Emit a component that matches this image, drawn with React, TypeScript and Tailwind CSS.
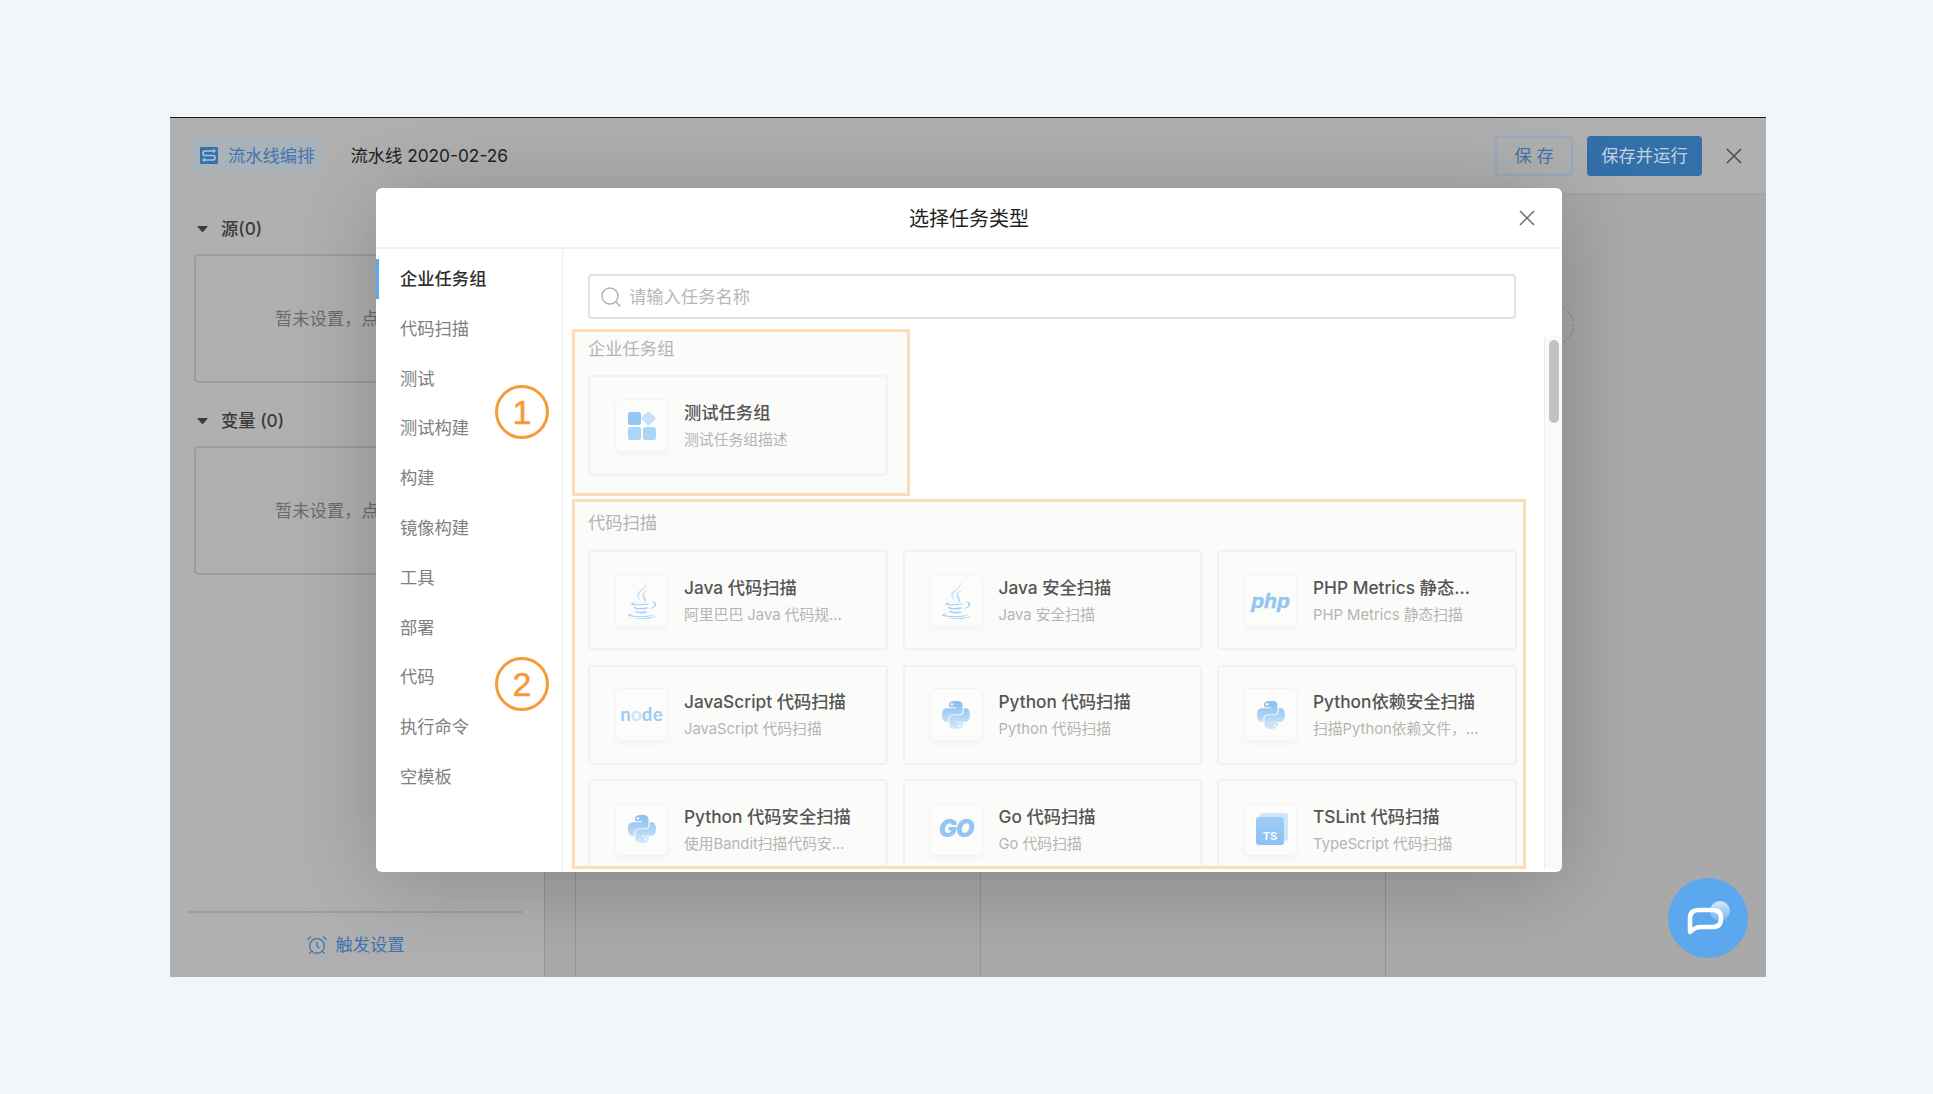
import { ReactNode } from "react";
import { AlarmClock, Search } from "lucide-react";
import { FaJava, FaPython } from "react-icons/fa";

const FONT = "font-['Inter','Noto_Sans_CJK_SC',sans-serif]";

const categorias = [
  "企业任务组",
  "代码扫描",
  "测试",
  "测试构建",
  "构建",
  "镜像构建",
  "工具",
  "部署",
  "代码",
  "执行命令",
  "空模板",
];

function IconeGrupo() {
  return (
    <svg width="28" height="28" viewBox="0 0 28 28">
      <rect x="0" y="0" width="13" height="13" rx="2.5" fill="#94c6f4" />
      <rect x="15" y="1" width="11" height="11" rx="2" transform="rotate(45 20.5 6.5)" fill="#c9e2f9" />
      <rect x="0" y="15" width="13" height="13" rx="2.5" fill="#abd4f7" />
      <rect x="15" y="15" width="13" height="13" rx="2.5" fill="#abd4f7" />
    </svg>
  );
}

function IconeJava() {
  return <FaJava className="h-[38px] w-[38px] fill-[url(#gradJava)]" />;
}

function IconePython() {
  return <FaPython className="h-[32px] w-[32px] fill-[url(#gradPython)]" />;
}

function IconeNode() {
  return (
    <span className="font-['Lato',sans-serif] text-[18.5px] leading-none font-bold tracking-[0.3px] text-[#9ccbf5]">
      n<span className="text-[#cfe5f9]">o</span>de
    </span>
  );
}

function IconePhp() {
  return (
    <span className="font-['Liberation_Sans',sans-serif] text-[21px] leading-none font-bold text-[#92c5f3] italic [-webkit-text-stroke:0.5px_#92c5f3]">
      php
    </span>
  );
}

function IconeGo() {
  return (
    <span className="font-['Inter',sans-serif] text-[24px] leading-none font-black tracking-[-1px] text-[#92c5f3] italic">
      GO
    </span>
  );
}

function IconeTs() {
  return (
    <div className="relative ml-[3px] h-[32px] w-[32px]">
      <div className="absolute top-0 right-0 h-[28px] w-[28px] rounded-[3px] bg-[#cfe5f9]" />
      <div className="absolute bottom-0 left-0 flex h-[28px] w-[28px] items-end justify-center rounded-[3px] bg-gradient-to-b from-[#9fcdf5] to-[#8cc1f2] pb-[2px] font-['Inter',sans-serif] text-[11px] leading-[14px] font-semibold text-white">
        TS
      </div>
    </div>
  );
}

const tarefas: { titulo: string; descricao: string; icone: ReactNode }[] = [
  { titulo: "Java 代码扫描", descricao: "阿里巴巴 Java 代码规...", icone: <IconeJava /> },
  { titulo: "Java 安全扫描", descricao: "Java 安全扫描", icone: <IconeJava /> },
  { titulo: "PHP Metrics 静态...", descricao: "PHP Metrics 静态扫描", icone: <IconePhp /> },
  { titulo: "JavaScript 代码扫描", descricao: "JavaScript 代码扫描", icone: <IconeNode /> },
  { titulo: "Python 代码扫描", descricao: "Python 代码扫描", icone: <IconePython /> },
  { titulo: "Python依赖安全扫描", descricao: "扫描Python依赖文件，...", icone: <IconePython /> },
  { titulo: "Python 代码安全扫描", descricao: "使用Bandit扫描代码安...", icone: <IconePython /> },
  { titulo: "Go 代码扫描", descricao: "Go 代码扫描", icone: <IconeGo /> },
  { titulo: "TSLint 代码扫描", descricao: "TypeScript 代码扫描", icone: <IconeTs /> },
];

function CartaoTarefa({ titulo, descricao, icone }: { titulo: string; descricao: string; icone: ReactNode }) {
  return (
    <div className="flex h-[100px] shrink-0 items-center gap-[16px] rounded-[4px] border-2 border-[#f2f2f0] pl-[25px]">
      <div className="flex h-[53px] w-[53px] shrink-0 items-center justify-center rounded-[6px] border border-[#f4f4f2] bg-[#fcfcfb] shadow-[0_3px_7px_rgba(0,0,0,0.03)]">
        {icone}
      </div>
      <div className="flex flex-col gap-[5px] whitespace-nowrap">
        <p className="text-[17.3px] leading-[24px] font-medium text-[#555555]">{titulo}</p>
        <p className="text-[14.8px] leading-[20px] text-[#b5b5b3]">{descricao}</p>
      </div>
    </div>
  );
}

function Fechar({ cor }: { cor: string }) {
  return (
    <svg width="16" height="16" viewBox="0 0 16 16" className={cor}>
      <path d="M1 1L15 15M15 1L1 15" stroke="currentColor" strokeWidth="1.5" fill="none" />
    </svg>
  );
}

function Seta() {
  return (
    <svg width="11" height="7" viewBox="0 0 11 7">
      <path d="M0 0H11L5.5 6.5Z" fill="#3b3b3b" />
    </svg>
  );
}

function IconePipeline() {
  return (
    <svg width="18" height="17" viewBox="0 0 18 17">
      <rect width="18" height="17" rx="1" fill="#3572ad" />
      <path d="M15 4H5Q3 4 3 6.2T5 8.5H13Q15 8.5 15 10.7T13 13H3" stroke="#b4c3d1" strokeWidth="1.7" fill="none" />
      <path d="M13 2L15.5 4L13 6M5 11L2.5 13L5 15" stroke="#b4c3d1" strokeWidth="1" fill="none" />
    </svg>
  );
}

function SecaoVazia({ titulo, margem }: { titulo: string; margem: string }) {
  return (
    <div className={margem}>
      <div className="flex h-[24px] items-center gap-[13px] pl-[27px]">
        <Seta />
        <span className="text-[17.3px] leading-[24px] font-medium text-[#3a3a3a]">{titulo}</span>
      </div>
      <div className="mt-[13px] ml-[24px] flex h-[129px] w-[500px] items-center rounded-[5px] border-2 border-[#9d9d9d] pl-[79px] text-[17.3px] text-[#6c6c6c]">
        暂未设置，点
      </div>
    </div>
  );
}

function Anotacao({ numero, posicao }: { numero: string; posicao: string }) {
  return (
    <div
      className={`absolute flex h-[54px] w-[54px] items-center justify-center rounded-full border-[3px] border-[#f49a37] bg-white font-['Liberation_Sans',sans-serif] text-[34px] leading-none text-[#f49a37] [-webkit-text-stroke:0.5px_#f49a37] ${posicao}`}
    >
      {numero}
    </div>
  );
}

function Modal() {
  return (
    <section className="absolute top-[70px] left-[206px] flex h-[684px] w-[1186px] flex-col overflow-hidden rounded-[6px] bg-white shadow-[0_8px_90px_rgba(0,0,0,0.22)]">
      <header className="relative flex h-[61px] shrink-0 items-center justify-center border-b-2 border-[#f1f1f1] pt-[2px]">
        <h2 className="text-[20px] leading-[28px] font-normal text-[#1f1f1f]">选择任务类型</h2>
        <button className="absolute top-[22px] right-[27px] flex text-[#666666]">
          <Fechar cor="text-[#6b6b6b]" />
        </button>
      </header>

      <div className="flex min-h-0 flex-1">
        <nav className="relative w-[187px] shrink-0 border-r border-[#efefef] pt-[5px]">
          {categorias.map((nome, i) => (
            <div
              key={nome}
              className={
                i === 0
                  ? "relative flex h-[49.8px] items-center pl-[24px] text-[17.3px] font-medium text-[#2f2f2f]"
                  : "relative flex h-[49.8px] items-center pl-[24px] text-[17.3px] text-[#808080]"
              }
            >
              {i === 0 && <span className="absolute top-[5px] left-0 h-[40px] w-[3px] bg-[#5ca8ef]" />}
              {nome}
            </div>
          ))}
          <Anotacao numero="1" posicao="top-[136px] left-[119px]" />
          <Anotacao numero="2" posicao="top-[408px] left-[119px]" />
        </nav>

        <div className="relative flex min-w-0 flex-1 flex-col">
          <div className="mt-[25px] ml-[25px] flex h-[45px] w-[928px] shrink-0 items-center gap-[6px] rounded-[4px] border-2 border-[#e1e1e1] pl-[9px]">
            <Search size={24} strokeWidth={1.4} className="text-[#b0b0b0]" />
            <span className="text-[17.3px] text-[#b7b7b7]">请输入任务名称</span>
          </div>

          <div className="mt-[10px] ml-[9px] flex h-[167px] w-[338px] shrink-0 flex-col border-[3px] border-[#fddcba] bg-[#fbfbf9] pt-[5px] pl-[13px]">
            <p className="mb-[14px] text-[17.3px] leading-[24px] text-[#b4b4b4]">企业任务组</p>
            <div className="flex h-[101px] w-[300px] items-center gap-[16px] rounded-[4px] border-2 border-[#f2f2f0] pl-[25px]">
              <div className="flex h-[53px] w-[53px] shrink-0 items-center justify-center rounded-[6px] border border-[#f4f4f2] bg-[#fcfcfb] shadow-[0_3px_7px_rgba(0,0,0,0.03)]">
                <IconeGrupo />
              </div>
              <div className="flex flex-col gap-[5px] whitespace-nowrap">
                <p className="text-[17.3px] leading-[24px] font-medium text-[#555555]">测试任务组</p>
                <p className="text-[14.8px] leading-[20px] text-[#b5b5b3]">测试任务组描述</p>
              </div>
            </div>
          </div>

          <div className="mt-[3px] ml-[9px] h-[370px] w-[954px] shrink-0 overflow-hidden border-[3px] border-[#fddcba] bg-[#fbfbf9] pt-[9px] pl-[13px]">
            <p className="mb-[15px] text-[17.3px] leading-[24px] text-[#b4b4b4]">代码扫描</p>
            <div className="grid grid-cols-[299.5px_299.5px_299.5px] gap-x-[15px] gap-y-[14.6px]">
              {tarefas.map((t) => (
                <CartaoTarefa key={t.titulo} titulo={t.titulo} descricao={t.descricao} icone={t.icone} />
              ))}
            </div>
          </div>

          <div className="absolute top-[87px] right-0 bottom-[3px] w-[18px] border-l border-[#ececec] bg-[#fafafa] pt-[4px] pl-[4px]">
            <div className="h-[83px] w-[10px] rounded-full bg-[#c1c1c1]" />
          </div>
        </div>
      </div>
    </section>
  );
}

export default function App() {
  return (
    <main className={`h-[1094px] w-[1933px] overflow-hidden bg-[#f1f6fb] pt-[117px] pl-[170px] ${FONT}`}>
      <svg className="absolute h-0 w-0">
        <defs>
          <linearGradient id="gradJava" x1="0" y1="0" x2="0" y2="1">
            <stop offset="0" stopColor="#d6e9fa" />
            <stop offset="0.45" stopColor="#c6e0f8" />
            <stop offset="0.6" stopColor="#9ccbf5" />
            <stop offset="1" stopColor="#a9d3f7" />
          </linearGradient>
          <linearGradient id="gradPython" x1="0" y1="0" x2="0" y2="1">
            <stop offset="0" stopColor="#86bdf1" />
            <stop offset="1" stopColor="#d3e8fb" />
          </linearGradient>
          <linearGradient id="gradBolha" x1="0" y1="0" x2="0" y2="1">
            <stop offset="0" stopColor="#ffffff" stopOpacity="0.75" />
            <stop offset="1" stopColor="#ffffff" stopOpacity="0.15" />
          </linearGradient>
        </defs>
      </svg>

      <div className="relative flex h-[860px] w-[1596px] flex-col overflow-hidden border-t border-[#1a1a1a] bg-[#a9a9a9]">
        <header className="flex h-[75px] shrink-0 items-center bg-[#b0b0b0] pr-[24px] pl-[21px] shadow-[0_1px_3px_rgba(0,0,0,0.06)]">
          <div className="flex h-[35px] items-center gap-[10px] rounded-[6px] bg-[#a9b1b9] pr-[10px] pl-[9px] text-[17.3px] text-[#3e76ad]">
            <IconePipeline />
            流水线编排
          </div>
          <span className="ml-[26px] text-[17.3px] text-[#1f1f1f]">流水线 2020-02-26</span>
          <div className="ml-auto flex items-center">
            <button className="h-[40px] w-[78px] rounded-[4px] border-2 border-[#98acbe] text-[17.3px] text-[#3e76ad]">
              保 存
            </button>
            <button className="ml-[14px] h-[40px] w-[115px] rounded-[4px] bg-[#336fa9] text-[17.3px] text-[#c3d2df]">
              保存并运行
            </button>
            <span className="ml-[24px] flex text-[#444444]">
              <Fechar cor="text-[#4a4a4a]" />
            </span>
          </div>
        </header>

        <div className="flex min-h-0 flex-1">
          <aside className="flex w-[375px] shrink-0 flex-col border-r border-[#949494] bg-[#b0b0b0] pt-[24px]">
            <SecaoVazia titulo="源(0)" margem="" />
            <SecaoVazia titulo="变量 (0)" margem="mt-[26px]" />
            <div className="mt-auto mr-[21px] ml-[18px] flex h-[66px] items-center justify-center gap-[7px] border-t-2 border-[#9d9d9d] text-[17.3px] text-[#3e76ad]">
              <AlarmClock size={22} strokeWidth={1.4} />
              触发设置
            </div>
          </aside>
          <div className="w-[31px] shrink-0 border-r border-[#949494]" />
          <div className="w-[405px] shrink-0 border-r border-[#949494]" />
          <div className="w-[405px] shrink-0 border-r border-[#949494]" />
        </div>

        <div className="absolute top-[187px] left-[1364px] h-[40px] w-[40px] rounded-full border border-dashed border-[#8c8c8c]" />

        <Modal />

        <button className="absolute top-[760px] left-[1498px] h-[80px] w-[80px] rounded-full bg-[#5ba8ef]">
          <svg width="80" height="80" viewBox="0 0 80 80">
            <circle cx="52" cy="33" r="10" fill="url(#gradBolha)" />
            <path
              d="M22 54V40Q22 32 31 32H45Q53 32 53 40.5Q53 49 45 49H33Q27 49 22 54Z"
              stroke="#ffffff"
              strokeWidth="4.5"
              fill="none"
              strokeLinejoin="round"
            />
          </svg>
        </button>
      </div>
    </main>
  );
}
